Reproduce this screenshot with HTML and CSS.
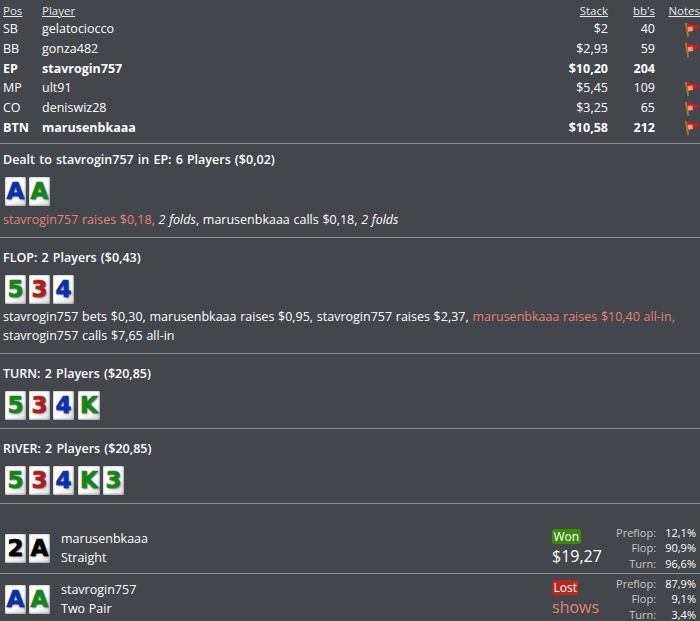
FILE: index.html
```html
<!DOCTYPE html>
<html lang="en">
<head>
    <meta charset="UTF-8">
    <meta name="viewport" content="width=device-width, initial-scale=1.0">
    <title>Hand history</title>
    <link rel="stylesheet" href="styles.css">
</head>
<body>
    <svg class="defs" width="0" height="0">
        <symbol id="flag" viewBox="0 0 16 16">
            <path d="M1.8 1 L4.2 15" stroke="#a07a3c" stroke-width="1.8" fill="none"/>
            <path d="M3 1.5 L9 3 L15.5 4.5 L9 9 L4 10 Z" fill="#e8121a"/>
            <path d="M3.5 5 L8.5 4.5 L9 9 L4.2 9.8 Z" fill="#d9a37c"/>
        </symbol>
    </svg>

    <table class="players">
        <thead>
            <tr>
                <th class="pos">Pos</th>
                <th class="name">Player</th>
                <th class="num">Stack</th>
                <th class="num bbs">bb's</th>
                <th class="notes">Notes</th>
            </tr>
        </thead>
        <tbody>
            <tr><td>SB</td><td>gelatociocco</td><td class="num">$2</td><td class="num">40</td><td class="notes"><svg class="flag" viewBox="0 0 16 16"><use href="#flag"/></svg></td></tr>
            <tr><td>BB</td><td>gonza482</td><td class="num">$2,93</td><td class="num">59</td><td class="notes"><svg class="flag" viewBox="0 0 16 16"><use href="#flag"/></svg></td></tr>
            <tr class="hero"><td>EP</td><td>stavrogin757</td><td class="num">$10,20</td><td class="num">204</td><td class="notes"></td></tr>
            <tr><td>MP</td><td>ult91</td><td class="num">$5,45</td><td class="num">109</td><td class="notes"><svg class="flag" viewBox="0 0 16 16"><use href="#flag"/></svg></td></tr>
            <tr><td>CO</td><td>deniswiz28</td><td class="num">$3,25</td><td class="num">65</td><td class="notes"><svg class="flag" viewBox="0 0 16 16"><use href="#flag"/></svg></td></tr>
            <tr class="hero"><td>BTN</td><td>marusenbkaaa</td><td class="num">$10,58</td><td class="num">212</td><td class="notes"><svg class="flag" viewBox="0 0 16 16"><use href="#flag"/></svg></td></tr>
        </tbody>
    </table>

    <section class="street first">
        <h2>Dealt to stavrogin757 in EP: 6 Players ($0,02)</h2>
        <div class="cards">
            <span class="card blue">A</span><span class="card green">A</span>
        </div>
        <p class="actions"><span class="hot">stavrogin757 raises $0,18,</span> <em>2 folds</em>, marusenbkaaa calls $0,18, <em>2 folds</em></p>
    </section>

    <section class="street">
        <h2>FLOP: 2 Players ($0,43)</h2>
        <div class="cards">
            <span class="card green">5</span><span class="card red">3</span><span class="card blue">4</span>
        </div>
        <p class="actions">stavrogin757 bets $0,30, marusenbkaaa raises $0,95, stavrogin757 raises $2,37, <span class="hot">marusenbkaaa raises $10,40 all-in,</span> stavrogin757 calls $7,65 all-in</p>
    </section>

    <section class="street">
        <h2>TURN: 2 Players ($20,85)</h2>
        <div class="cards">
            <span class="card green">5</span><span class="card red">3</span><span class="card blue">4</span><span class="card wide green">K</span>
        </div>
    </section>

    <section class="street">
        <h2>RIVER: 2 Players ($20,85)</h2>
        <div class="cards">
            <span class="card green">5</span><span class="card red">3</span><span class="card blue">4</span><span class="card wide green">K</span><span class="card green">3</span>
        </div>
    </section>

    <div class="showdown">
        <div class="result">
            <div class="cards">
                <span class="card black">2</span><span class="card black">A</span>
            </div>
            <div class="who">
                <div>marusenbkaaa</div>
                <div>Straight</div>
            </div>
            <div class="outcome">
                <span class="badge won">Won</span>
                <div class="amount">$19,27</div>
            </div>
            <table class="equity">
                <tr><td>Preflop:</td><td>12,1%</td></tr>
                <tr><td>Flop:</td><td>90,9%</td></tr>
                <tr><td>Turn:</td><td>96,6%</td></tr>
            </table>
        </div>
        <div class="result">
            <div class="cards">
                <span class="card blue">A</span><span class="card green">A</span>
            </div>
            <div class="who">
                <div>stavrogin757</div>
                <div>Two Pair</div>
            </div>
            <div class="outcome">
                <span class="badge lost">Lost</span>
                <div class="amount shows">shows</div>
            </div>
            <table class="equity">
                <tr><td>Preflop:</td><td>87,9%</td></tr>
                <tr><td>Flop:</td><td>9,1%</td></tr>
                <tr><td>Turn:</td><td>3,4%</td></tr>
            </table>
        </div>
    </div>
</body>
</html>
```

FILE: styles.css
```css
html, body {
    height: 621px;
    overflow: hidden;
}
body {
    margin: 0;
    background-color: #43464a;
    color: #fff;
    font-family: "Open Sans", Arial, sans-serif;
    font-size: 12.5px;
    line-height: 19px;
    word-spacing: 0.45px;
}
.defs {
    position: absolute;
}
.players {
    width: 100%;
    border-collapse: collapse;
    margin-top: 2px;
    margin-bottom: 5.5px;
}
.players th {
    font-weight: normal;
    font-size: 11.5px;
    text-align: left;
    text-decoration: underline;
    padding: 0;
    height: 17px;
    line-height: 16px;
    color: #e8e8e8;
}
.players td {
    padding: 0;
    height: 19.7px;
}
.players .pos {
    width: 39px;
    padding-left: 3px;
}
.players td:first-child {
    padding-left: 3px;
}
.players .num {
    text-align: right;
}
.players .bbs {
    width: 47px;
}
.players .notes {
    width: 45px;
    text-align: right;
}
.hero {
    font-weight: bold;
}
.flag {
    display: inline-block;
    width: 16px;
    height: 16px;
    vertical-align: middle;
}
.street {
    border-top: 1px solid #8a8c8e;
    padding: 10px 3px 8px;
}
.street.first {
    padding-top: 6.5px;
}
.street h2 {
    margin: 0 0 8px;
    font-size: 12.5px;
    font-weight: 600;
    line-height: 19px;
    word-spacing: 0.9px;
}
.actions {
    margin: 3.5px 0 0;
}
.hot {
    color: #e0837a;
}
.cards {
    display: flex;
    gap: 3px;
    padding-left: 2px;
}
.card {
    display: block;
    width: 21px;
    height: 29px;
    overflow: hidden;
    background: linear-gradient(135deg, #fff 60%, #d8d8d8);
    border-radius: 2px;
    box-shadow: inset -1px -1px 2px #aaa, inset 1px 1px 1px #ddd;
    text-align: center;
    font-family: "DejaVu Sans", "Liberation Sans", sans-serif;
    font-size: 23px;
    font-weight: bold;
    line-height: 29px;
    -webkit-text-stroke: 0.7px currentColor;
    text-shadow: 1px 1px 2px #777;
}
.card.wide {
    width: 22px;
    margin-left: 1px;
}
.green { color: #14851a; }
.red { color: #b01c1c; }
.blue { color: #0c2fae; }
.black { color: #000; }
.showdown {
    border-top: 1px solid #8a8c8e;
    padding-top: 19px;
}
.result {
    display: flex;
    align-items: center;
    height: 50px;
    padding: 0 4px 0 3px;
}
.result + .result {
    border-top: 1px solid #8a8c8e;
}
.who {
    margin-left: 11px;
    flex: 1;
}
.outcome {
    width: 64px;
    align-self: flex-start;
    padding-top: 6px;
}
.badge {
    display: block;
    width: fit-content;
    padding: 0 1.5px;
    border-radius: 2px;
    font-size: 12px;
    line-height: 15px;
}
.won {
    background-color: #3a8a0c;
}
.lost {
    background-color: #b8281e;
}
.amount {
    font-size: 16px;
    line-height: 22px;
    margin-top: 1px;
}
.shows {
    color: #e0837a;
}
.equity {
    width: 80px;
    border-collapse: collapse;
    font-size: 11px;
    line-height: 15.5px;
}
.equity td {
    padding: 0;
    text-align: right;
}
.equity td + td {
    padding-left: 9px;
}
.equity td:first-child {
    color: #c8c8c8;
}
```
